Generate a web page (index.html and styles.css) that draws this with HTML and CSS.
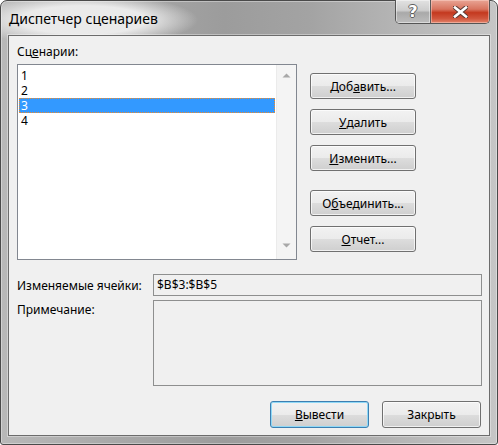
FILE: index.html
```html
<!DOCTYPE html>
<html lang="ru">
<head>
<meta charset="utf-8">
<title>Диспетчер сценариев</title>
<link rel="stylesheet" href="styles.css">
</head>
<body>
<div class="window">
  <div class="titlebar">
    <div class="title">Диспетчер сценариев</div>
    <div class="caption-btns">
      <div class="cbtn help"><span class="qmark">?</span></div>
      <div class="cbtn close">
        <svg width="15" height="12" viewBox="0 0 15 12">
          <path d="M2 1.5 L13 10.5 M13 1.5 L2 10.5" stroke="#5a3a34" stroke-width="4.6" stroke-linecap="square" fill="none"/>
          <path d="M2 1.5 L13 10.5 M13 1.5 L2 10.5" stroke="#ffffff" stroke-width="2.6" stroke-linecap="square" fill="none"/>
        </svg>
      </div>
    </div>
  </div>
  <div class="client">
    <div class="top">
      <div class="left">
        <div class="label">Сц<u>е</u>нарии:</div>
        <div class="listbox">
          <div class="items">
            <div class="item">1</div>
            <div class="item">2</div>
            <div class="item sel">3</div>
            <div class="item">4</div>
          </div>
          <div class="vscroll">
            <svg class="arrow" width="9" height="5" viewBox="0 0 9 5"><path d="M0.5 4.5 L4.5 0.5 L8.5 4.5 Z" fill="#a8a8a8"/></svg>
            <svg class="arrow" width="9" height="5" viewBox="0 0 9 5"><path d="M0.5 0.5 L4.5 4.5 L8.5 0.5 Z" fill="#a8a8a8"/></svg>
          </div>
        </div>
      </div>
      <div class="side-buttons">
        <div class="btn">Доб<u>а</u>вить...</div>
        <div class="btn"><u>У</u>далить</div>
        <div class="btn"><u>И</u>зменить...</div>
        <div class="btn sep">О<u>б</u>ъединить...</div>
        <div class="btn"><u>О</u>тчет...</div>
      </div>
    </div>
    <div class="fields">
      <div class="flabel mid">Изменяемые ячейки:</div>
      <div class="tbox">$B$3:$B$5</div>
      <div class="flabel topl">Примечание:</div>
      <div class="tbox note"></div>
    </div>
    <div class="bottom-buttons">
      <div class="btn wide default"><u>В</u>ывести</div>
      <div class="btn wide">Закрыть</div>
    </div>
  </div>
</div>
</body>
</html>
```
FILE: styles.css
```css
html, body {
  margin: 0;
  padding: 0;
}
body {
  width: 498px;
  height: 445px;
  overflow: hidden;
  font-family: "Noto Sans", "Open Sans", sans-serif;
  font-size: 12px;
  color: #000;
  background: #fff;
}
.window {
  box-sizing: border-box;
  width: 498px;
  height: 445px;
  border: 1px solid #4a4a4a;
  border-radius: 7px 7px 3px 3px;
  padding: 0 7px 8px 7px;
  display: flex;
  flex-direction: column;
  background:
    radial-gradient(ellipse 115px 26px at 82px 19px, rgba(236,236,236,0.97) 55%, rgba(236,236,236,0) 100%),
    linear-gradient(90deg, #b8b8b8 0%, #a9a9a9 22%, #9c9c9c 45%, #a3a3a3 62%, #b5b5b5 80%, #c6c6c6 100%);
  box-shadow: inset 0 0 0 1px rgba(255,255,255,0.35);
}
.titlebar {
  height: 34px;
  display: flex;
  justify-content: space-between;
  align-items: flex-start;
}
.title {
  font-size: 14px;
  line-height: 20px;
  margin-top: 8px;
  margin-left: 1px;
  color: #000;
}
.caption-btns {
  margin-top: -1px;
  display: flex;
  border: 1px solid #555;
  border-top: none;
  border-radius: 0 0 5px 5px;
  overflow: hidden;
  height: 23px;
}
.cbtn {
  height: 23px;
  display: flex;
  align-items: center;
  justify-content: center;
}
.help {
  width: 34px;
  border-right: 1px solid #5a5a5a;
  background: linear-gradient(#e2e2e2 0%, #cdcdcd 45%, #a9a9a9 55%, #bdbdbd 100%);
  box-shadow: inset 0 0 0 1px rgba(255,255,255,0.45);
}
.qmark {
  font-family: "DejaVu Sans", sans-serif;
  font-weight: bold;
  font-size: 16px;
  line-height: 16px;
  color: #fff;
  margin-top: 1px;
  text-shadow: 1px 0 0 #5e5e5e, -1px 0 0 #5e5e5e, 0 1px 0 #5e5e5e, 0 -1px 0 #5e5e5e;
}
.close {
  width: 58px;
  background: linear-gradient(#e9a595 0%, #d8745f 40%, #c4391f 55%, #d0553c 80%, #e3836a 100%);
  box-shadow: inset 0 0 0 1px rgba(255,220,210,0.45);
}
.client {
  flex: 1;
  border: 1px solid #6c6c6c;
  background: #f0f0f0;
  padding: 8px 7px 7px 8px;
  display: flex;
  flex-direction: column;
  box-shadow: 0 0 0 1px rgba(255,255,255,0.35);
}
.top {
  display: flex;
  gap: 13px;
}
.left {
  width: 280px;
  display: flex;
  flex-direction: column;
}
.label {
  line-height: 15px;
  height: 15px;
  margin-bottom: 5px;
}
u {
  text-decoration: underline;
  text-underline-offset: 1px;
}
.listbox {
  box-sizing: border-box;
  height: 196px;
  border: 1px solid #828790;
  background: #fff;
  display: flex;
}
.items {
  flex: 1;
  padding: 3px 0 0 1px;
}
.item {
  box-sizing: border-box;
  height: 15px;
  line-height: 15px;
  padding-left: 2px;
}
.item.sel {
  background: #3399ff;
  color: #fff;
  border: 1px dotted #ee8a2a;
  line-height: 13px;
  padding-left: 1px;
}
.vscroll {
  width: 19px;
  margin-left: 1px;
  background: #f4f4f4;
  border-left: 1px solid #ebebeb;
  display: flex;
  flex-direction: column;
  align-items: center;
  justify-content: space-between;
  padding: 8px 0 11px;
}
.arrow {
  display: block;
}
.side-buttons {
  display: flex;
  flex-direction: column;
  gap: 10px;
  padding-top: 29px;
  width: 106px;
}
.btn {
  box-sizing: border-box;
  height: 26px;
  border: 1px solid #707070;
  border-radius: 3px;
  background: linear-gradient(#f2f2f2 0%, #ebebeb 50%, #dddddd 50%, #cfcfcf 100%);
  box-shadow: inset 0 0 0 1px rgba(255,255,255,0.7);
  display: flex;
  align-items: center;
  justify-content: center;
  line-height: 15px;
}
.btn.sep {
  margin-top: 9px;
}
.fields {
  margin-top: 14px;
  display: grid;
  grid-template-columns: 136px 1fr;
  row-gap: 4px;
}
.flabel {
  line-height: 15px;
}
.flabel.mid {
  align-self: center;
}
.flabel.topl {
  padding-top: 2px;
}
.tbox {
  box-sizing: border-box;
  height: 22px;
  border: 1px solid #8e8f8f;
  background: #f0f0f0;
  padding-left: 3px;
  line-height: 20px;
  color: #000;
}
.tbox.note {
  height: 86px;
}
.bottom-buttons {
  margin-top: auto;
  display: flex;
  justify-content: flex-end;
  gap: 13px;
  padding-right: 1px;
}
.btn.wide {
  width: 99px;
  height: 27px;
}
.btn.default {
  border-color: #3c7fb1;
  box-shadow: inset 0 0 0 1px #8fd8f6;
}
```
